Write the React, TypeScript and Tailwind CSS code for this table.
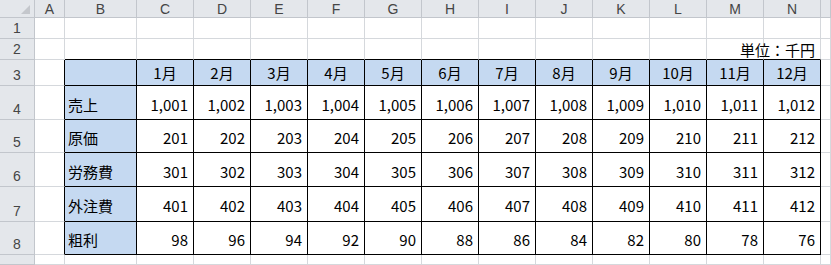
import React from "react";

const letters = ["A", "B", "C", "D", "E", "F", "G", "H", "I", "J", "K", "L", "M", "N", ""];
const months = ["1月", "2月", "3月", "4月", "5月", "6月", "7月", "8月", "9月", "10月", "11月", "12月"];

const rows: { label: string; values: number[] }[] = [
  { label: "売上", values: months.map((_, i) => 1001 + i) },
  { label: "原価", values: months.map((_, i) => 201 + i) },
  { label: "労務費", values: months.map((_, i) => 301 + i) },
  { label: "外注費", values: months.map((_, i) => 401 + i) },
  { label: "粗利", values: months.map((_, i) => 98 - 2 * i) },
];

const fmt = (n: number) => n.toLocaleString("en-US");

function cellContent(r: number, c: number): { text: string; align: string } | null {
  if (r === 2 && c === 13) return { text: "単位：千円", align: "justify-end items-end pr-[5px] pb-[2px]" };
  if (r === 3 && c >= 2 && c <= 13) return { text: months[c - 2], align: "justify-center items-center" };
  if (r >= 4 && r <= 8) {
    const row = rows[r - 4];
    if (c === 1) return { text: row.label, align: "justify-start items-center pl-[3px] pt-[3px]" };
    if (c >= 2 && c <= 13) return { text: fmt(row.values[c - 2]), align: "justify-end items-center pr-[5px] pt-[3px]" };
  }
  return null;
}

const headFont = { fontFamily: '"Liberation Sans", Arial, sans-serif' };

export default function App() {
  const sheetRows = [1, 2, 3, 4, 5, 6, 7, 8, 9];

  return (
    <div
      className="grid h-[265px] w-[831px] overflow-hidden bg-white grid-cols-[35px_30px_72px_repeat(12,57px)_1fr] grid-rows-[18px_21px_21px_26px_34px_33px_34px_35px_33px_1fr] text-black"
      style={{ fontFamily: '"Noto Sans CJK JP", "Noto Sans", sans-serif' }}
    >
      {/* corner */}
      <div className="relative border-r border-b border-r-[#c2c6cc] border-b-[#c2c6cc] bg-[#e4e7eb]">
        <svg className="absolute right-[4px] bottom-[3px]" width="9" height="9" viewBox="0 0 9 9">
          <polygon points="9,0 9,9 0,9" fill="#c4c7cc" />
        </svg>
      </div>
      {/* column headers */}
      {letters.map((l, i) => (
        <div
          key={"h" + i}
          className="flex items-center justify-center border-r border-b border-r-[#c2c6cc] border-b-[#c2c6cc] bg-[#e4e7eb] text-[14px] leading-none text-[#454545] pt-[1px]"
          style={headFont}
        >
          {l}
        </div>
      ))}

      {sheetRows.map((r) => (
        <React.Fragment key={"r" + r}>
          <div
            className="flex items-end justify-center border-r border-b border-r-[#c2c6cc] border-b-[#c2c6cc] bg-[#e4e7eb] text-[14px] leading-none text-[#454545] pb-[3px]"
            style={headFont}
          >
            {r <= 8 ? r : ""}
          </div>
          {letters.map((_, c) => {
            const inTable = r >= 3 && r <= 8 && c >= 1 && c <= 13;
            const rightBlack = inTable || (c === 0 && r >= 3 && r <= 8);
            const bottomBlack = inTable || (r === 2 && c >= 1 && c <= 13);
            const blue = inTable && (r === 3 || c === 1);
            const content = cellContent(r, c);
            return (
              <div
                key={r + "-" + c}
                className={`flex whitespace-nowrap border-r border-b text-[15px] leading-none ${
                  rightBlack ? "border-r-black" : "border-r-[#d5d8dc]"
                } ${bottomBlack ? "border-b-black" : "border-b-[#d5d8dc]"} ${
                  blue ? "bg-[#c5d9f1]" : "bg-white"
                } ${content ? content.align : ""}`}
              >
                {content ? content.text : null}
              </div>
            );
          })}
        </React.Fragment>
      ))}
    </div>
  );
}
